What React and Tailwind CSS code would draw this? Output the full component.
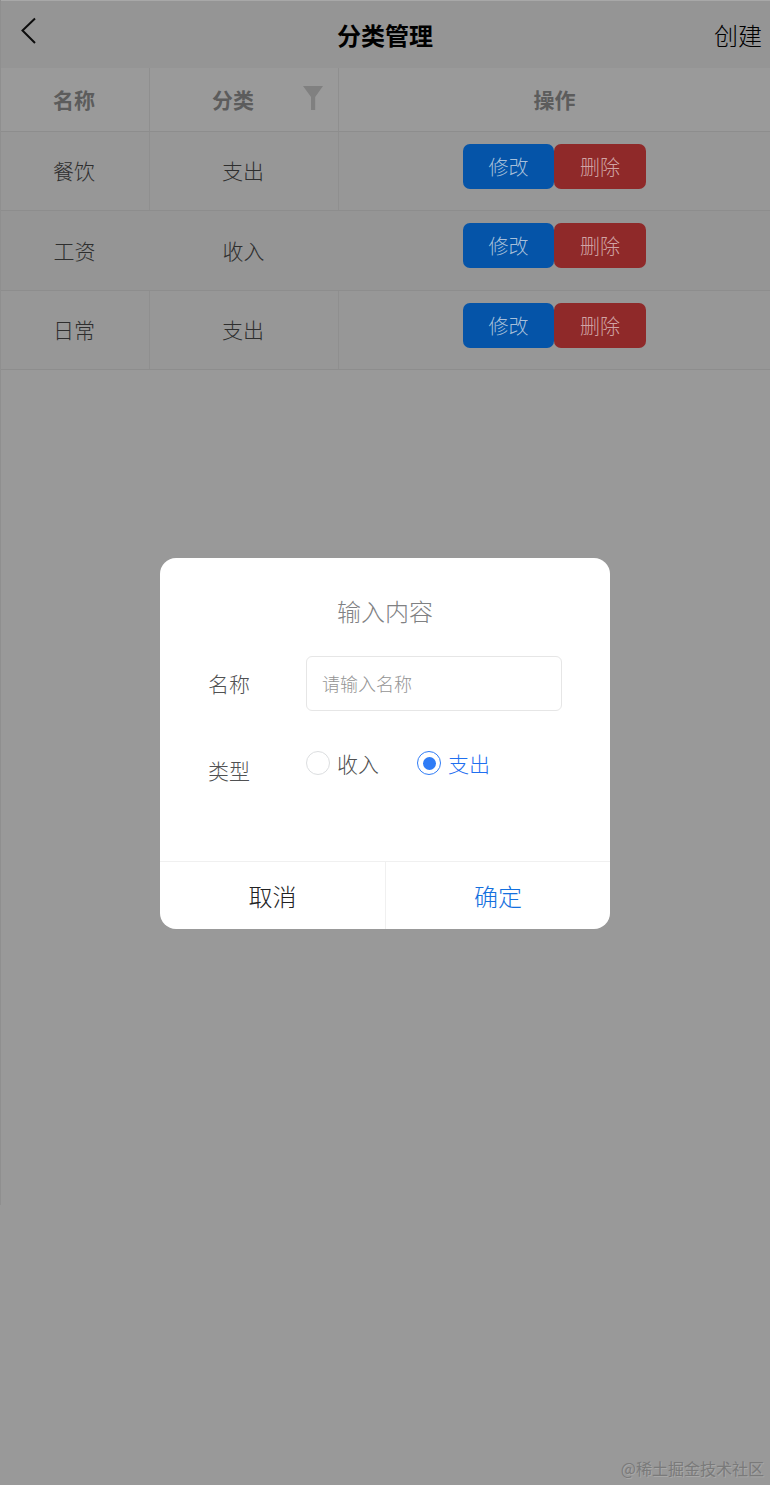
import { useState } from 'react'

const rows = [
  { id: 1, name: '餐饮', type: '支出' },
  { id: 2, name: '工资', type: '收入', hover: true },
  { id: 3, name: '日常', type: '支出' },
]

function FilterIcon() {
  return (
    <svg width="20" height="24" viewBox="0 0 20 24" className="absolute left-[153px] top-[18px]">
      <path d="M0 0h20l-7.8 11v13H8V11z" fill="#808080" />
    </svg>
  )
}

function CategoryRow({ row, heightClass }) {
  const cellLine = row.hover ? '' : 'border-r border-[#8f8f8f]'
  return (
    <div
      className={`grid grid-cols-[149px_189px_1fr] border-b border-[#8d8d8d] ${heightClass} ${
        row.hover ? 'bg-[#959595]' : 'bg-[#979797]'
      }`}
    >
      <div className={`flex items-center justify-center pr-[2px] text-[21px] font-light text-[#2e2e2e] ${cellLine}`}>
        {row.name}
      </div>
      <div className={`flex items-center justify-center pr-[2px] text-[21px] font-light text-[#2e2e2e] ${cellLine}`}>
        {row.type}
      </div>
      <div className="flex justify-center pt-[12px]">
        <button className="h-[45px] w-[91px] rounded-[7px] bg-[#0554a8] text-[20px] font-light text-[#a8c0da]">修改</button>
        <button className="h-[45px] w-[92px] rounded-[7px] bg-[#8f2929] text-[20px] font-light text-[#d0a4a4]">删除</button>
      </div>
    </div>
  )
}

function Radio({ label, checked, onClick }) {
  return (
    <button className="flex items-center" onClick={onClick}>
      <span
        className={`flex h-6 w-6 items-center justify-center rounded-full border bg-white ${
          checked ? 'border-[#2f7cf6]' : 'border-[#dcdee0]'
        }`}
      >
        {checked && <span className="h-[13px] w-[13px] rounded-full bg-[#2f7cf6]" />}
      </span>
      <span className={`ml-[7px] text-[21px] leading-6 font-light ${checked ? 'text-[#1f6ff0]' : 'text-[#505152]'}`}>{label}</span>
    </button>
  )
}

function CategoryDialog() {
  const [type, setType] = useState('支出')

  return (
    <div className="flex h-[371px] w-[450px] flex-col rounded-[16px] bg-white">
      <div className="flex flex-1 flex-col px-12">
        <h2 className="mt-[37px] text-center text-2xl leading-[32px] font-light text-[#808183]">输入内容</h2>

        <div className="mt-[29px] flex items-center">
          <label className="w-[98px] text-[21px] font-light text-[#505152]">名称</label>
          <div className="flex h-[55px] w-[256px] items-center rounded-[6px] border border-[#e6e6e6] px-[15px] text-[18px] font-light text-[#949494]">
            请输入名称
          </div>
        </div>

        <div className="mt-[45px] flex">
          <label className="w-[98px] text-[21px] leading-7 font-light text-[#505152]">类型</label>
          <div className="-mt-[5px] flex h-6 gap-[38px]">
            <Radio label="收入" checked={type === '收入'} onClick={() => setType('收入')} />
            <Radio label="支出" checked={type === '支出'} onClick={() => setType('支出')} />
          </div>
        </div>
      </div>

      <div className="grid h-[68px] grid-cols-[226px_1fr] border-t border-[#f0f0f0] text-2xl font-light">
        <button className="border-r border-[#f0f0f0] text-[#222223]">取消</button>
        <button className="text-[#1470de]">确定</button>
      </div>
    </div>
  )
}

export default function App() {
  return (
    <div className="relative h-[1485px] w-[770px] overflow-hidden bg-[#999999] font-['Noto_Sans_CJK_SC','Liberation_Sans',sans-serif]">
      <div className="h-[1205px] border-l border-[#8f8f8f]">
        {/* Header */}
        <header className="flex h-[68px] items-center justify-between border-t border-[#a8a8a8] bg-[#959595] pr-2 pl-[19px]">
          <svg width="20" height="28" viewBox="0 0 20 28" fill="none" className="-mt-[8px]">
            <path d="M15 1.5 2.5 13.5 15 26" stroke="#0d0d0d" strokeWidth="2" />
          </svg>
          <h1 className="ml-[16px] text-2xl font-bold text-black">分类管理</h1>
          <button className="text-2xl font-light text-black">创建</button>
        </header>

        {/* Table */}
        <div className="grid h-[64px] grid-cols-[149px_189px_1fr] border-b border-[#8d8d8d] bg-[#9a9a9a] text-[21px] font-bold text-[#5c5c5c]">
          <div className="flex items-center justify-center border-r border-[#8f8f8f] pt-[1px] pr-[2px]">名称</div>
          <div className="relative flex items-center justify-center border-r border-[#8f8f8f] pt-[1px] pr-[22px]">
            分类
            <FilterIcon />
          </div>
          <div className="flex items-center justify-center pt-[1px]">操作</div>
        </div>
        {rows.map((row, i) => (
          <CategoryRow key={row.id} row={row} heightClass={i === 1 ? 'h-[80px]' : 'h-[79px]'} />
        ))}
      </div>

      {/* Dialog */}
      <div className="absolute inset-0 flex items-center justify-center pt-[2px]">
        <CategoryDialog />
      </div>

      <span className="absolute right-[6px] bottom-[5px] text-[16px] text-[#7a7a7a] [text-shadow:1px_1px_0_#a8a8a8]">
        @稀土掘金技术社区
      </span>
    </div>
  )
}
